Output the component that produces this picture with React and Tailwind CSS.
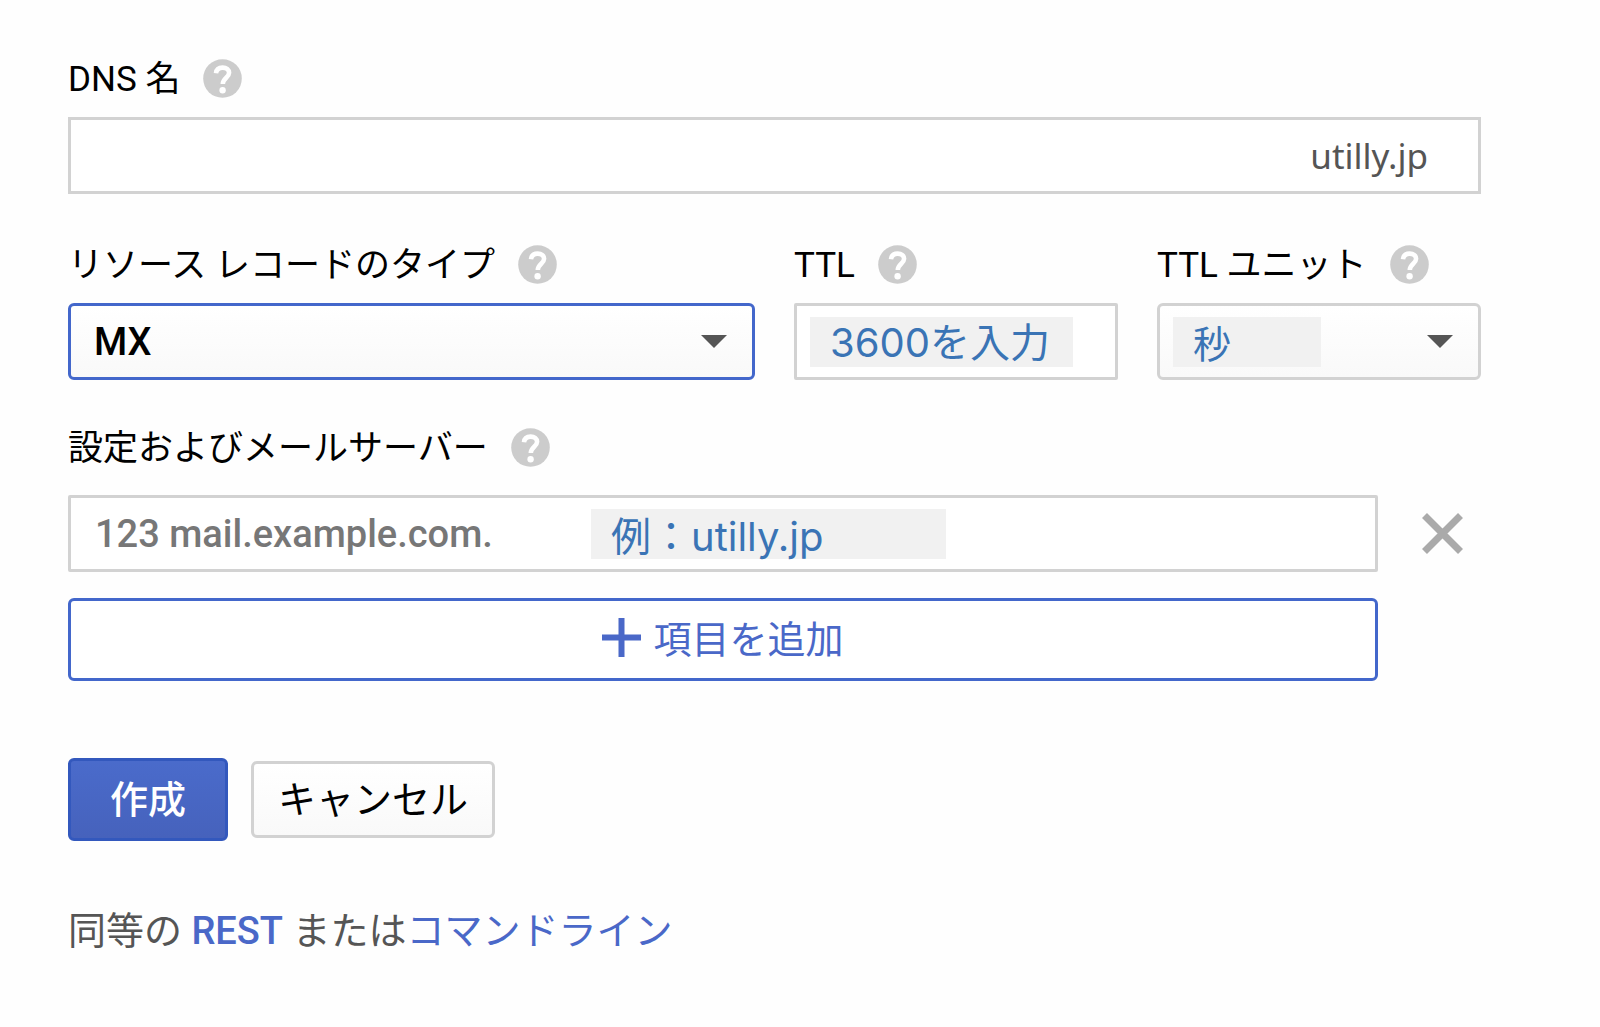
import { useState } from 'react'

const HelpButton = ({ topic }) => (
  <button type="button" aria-label={`${topic}のヘルプ`} className="shrink-0 cursor-pointer">
    <svg viewBox="0 0 39 39" className="block size-[39px]" fill="none">
      <circle cx="19.5" cy="19.5" r="19.3" fill="#cccccc" />
      <path d="M13 14.2c.4-3.8 3-5.600 6.600-5.600 3.900 0 6.500 2 6.500 5.200 0 4.800-6.300 5.200-6.300 11.200" stroke="#fff" strokeWidth="4.600" />
      <circle cx="19.600" cy="31.300" r="3.200" fill="#fff" />
    </svg>
  </button>
)

const FieldLabel = ({ htmlFor, children }) => (
  <div className="flex h-10 items-center gap-[23px] text-[35px] leading-10 whitespace-nowrap text-black">
    <label htmlFor={htmlFor} className="pt-1">{children}</label>
    <HelpButton topic={children} />
  </div>
)

const Caret = () => (
  <svg viewBox="0 0 26 13" className="pointer-events-none h-[13px] w-[26px] shrink-0" fill="#555555">
    <path d="M0 0h26L13 13z" />
  </svg>
)

export default function App() {
  const [dnsName, setDnsName] = useState('')
  const [type, setType] = useState('MX')
  const [ttl, setTtl] = useState('3600を入力')
  const [unit, setUnit] = useState('秒')
  const [server, setServer] = useState('')

  return (
    <form
      lang="ja"
      onSubmit={e => e.preventDefault()}
      className="min-h-screen bg-[#fefefe] pt-[58px] pr-[119px] pb-16 pl-[68px] font-[Roboto,'Noto_Sans_CJK_JP',sans-serif] text-[38px] leading-[48px]"
    >
      <FieldLabel htmlFor="dns-name">DNS 名</FieldLabel>
      <div className="mt-[19px] flex h-[77px] items-center border-3 border-[#d2d2d2] bg-white pr-[50px] pl-6">
        <input
          id="dns-name"
          value={dnsName}
          onChange={e => setDnsName(e.target.value)}
          className="min-w-0 flex-1 outline-none"
        />
        <span className="font-['Noto_Sans',sans-serif] text-[35px] text-[#555555]">utilly.jp</span>
      </div>

      <div className="mt-[50px] grid grid-cols-[687fr_324fr_324fr] gap-[39px]">
        <div className="min-w-0">
          <FieldLabel htmlFor="record-type">リソース レコードのタイプ</FieldLabel>
          <div className="mt-[19px] flex h-[77px] items-center rounded-md border-3 border-[#4367cb] bg-linear-to-b from-white to-[#f9f9f9] pr-[25px] pl-[23px]">
            <select
              id="record-type"
              value={type}
              onChange={e => setType(e.target.value)}
              className="min-w-0 flex-1 appearance-none font-medium text-black outline-none"
            >
              <option>MX</option>
            </select>
            <Caret />
          </div>
        </div>
        <div className="min-w-0">
          <FieldLabel htmlFor="ttl">TTL</FieldLabel>
          <div className="mt-[19px] flex h-[77px] items-center rounded-xs border-3 border-[#d2d2d2] bg-white pr-[42px] pl-[13px]">
            <input
              id="ttl"
              value={ttl}
              onChange={e => setTtl(e.target.value)}
              className="h-[50px] w-full bg-[#f1f1f1] pr-2 pb-1 pl-5 font-[Inter,'Noto_Sans_CJK_JP',sans-serif] text-[40px] text-[#3a74b5] outline-none"
            />
          </div>
        </div>
        <div className="min-w-0">
          <FieldLabel htmlFor="ttl-unit">TTL ユニット</FieldLabel>
          <div className="mt-[19px] flex h-[77px] items-center justify-between rounded-md border-3 border-[#d2d2d2] bg-linear-to-b from-white to-[#f9f9f9] pr-[25px] pl-[13px]">
            <select
              id="ttl-unit"
              value={unit}
              onChange={e => setUnit(e.target.value)}
              className="h-[50px] w-[148px] appearance-none bg-[#f1f1f1] px-5 pt-1 text-[#3a74b5] outline-none"
            >
              <option>秒</option>
            </select>
            <Caret />
          </div>
        </div>
      </div>

      <div className="mt-[47px]">
        <FieldLabel htmlFor="mail-server">設定およびメールサーバー</FieldLabel>
      </div>
      <div className="mt-7 grid grid-cols-[1fr_103px] gap-y-[26px]">
        <div className="flex h-[77px] items-center rounded-xs border-3 border-[#d2d2d2] bg-white pl-6">
          <input
            id="mail-server"
            value={server}
            onChange={e => setServer(e.target.value)}
            placeholder="123 mail.example.com."
            className="w-[496px] font-medium outline-none placeholder:text-[#777777]"
          />
          <span className="h-[50px] w-[355px] bg-[#f1f1f1] px-5 pt-1 font-[Inter,'Noto_Sans_CJK_JP',sans-serif] text-[40px] text-[#3a74b5]">
            例：utilly.jp
          </span>
        </div>
        <button type="button" aria-label="項目を削除" className="flex cursor-pointer items-center justify-end pr-[18px]">
          <svg viewBox="0 0 41 41" className="size-[41px]" fill="none" stroke="#aaaaaa" strokeWidth="7">
            <path d="M2.500 2.500l36 36M38.500 2.500l-36 36" />
          </svg>
        </button>
        <button
          type="button"
          className="flex h-[83px] cursor-pointer items-center justify-center gap-3 rounded-md border-3 border-[#4367cb] bg-white text-[#4a68c8]"
        >
          <svg viewBox="0 0 39 39" className="mb-1 size-[39px]" fill="#4a68c8">
            <path d="M16.500 0h6v16.500H39v6H22.500V39h-6V22.500H0v-6h16.500z" />
          </svg>
          <span>項目を追加</span>
        </button>
      </div>

      <div className="mt-[77px] flex items-center gap-[23px]">
        <button
          type="submit"
          className="h-[83px] cursor-pointer rounded-md border-3 border-[#3358bd] bg-linear-to-b from-[#4a6bcb] to-[#4662bc] px-[39px] font-medium text-white"
        >
          作成
        </button>
        <button
          type="button"
          className="h-[77px] cursor-pointer rounded-md border-3 border-[#d2d2d2] bg-linear-to-b from-white to-[#f9f9f9] px-6 text-black"
        >
          キャンセル
        </button>
      </div>

      <p className="mt-[66px] text-[#555555]">
        同等の <a href="#rest" className="font-medium text-[#4a68c8]">REST</a> または<a href="#cli" className="text-[#4a68c8]">コマンドライン</a>
      </p>
    </form>
  )
}
